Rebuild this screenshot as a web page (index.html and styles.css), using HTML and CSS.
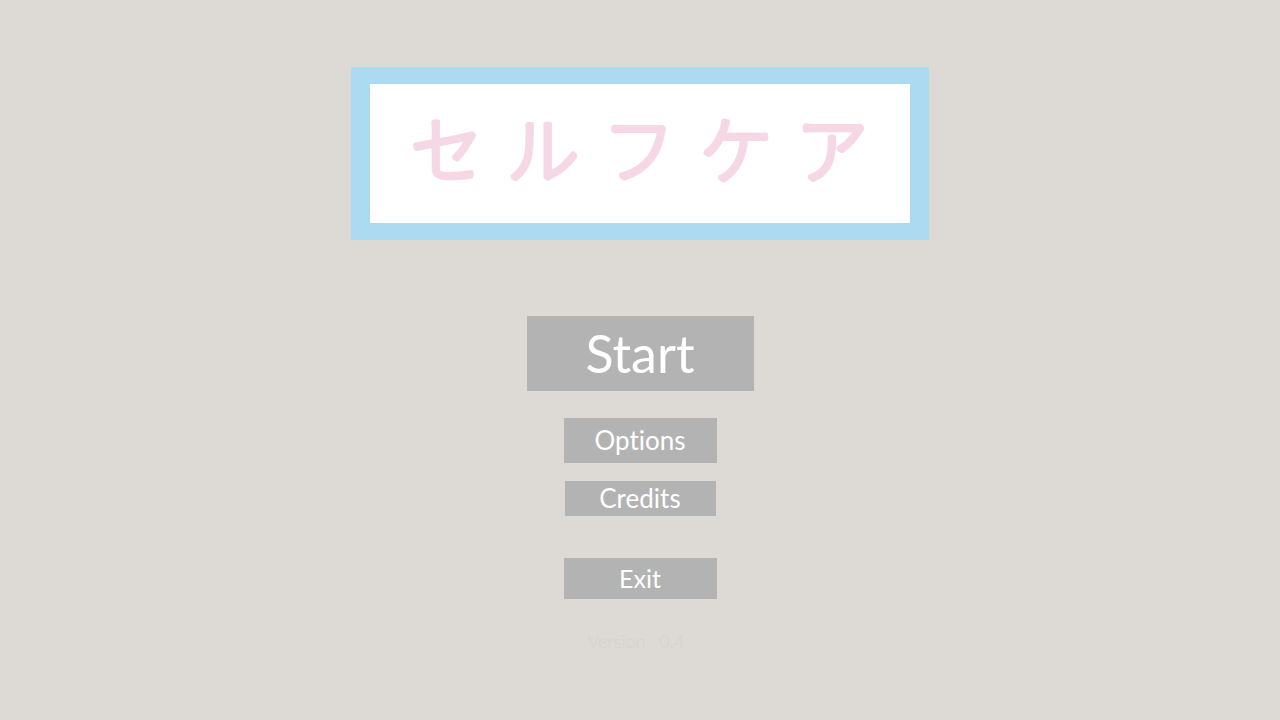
FILE: index.html
```html
<!DOCTYPE html>
<html lang="en">
<head>
<meta charset="utf-8">
<meta name="viewport" content="width=device-width, initial-scale=1">
<title>セルフケア</title>
<link rel="stylesheet" href="styles.css">
</head>
<body>
<main class="menu">
  <h1 class="logo" lang="ja">
    <svg class="logo-text" viewBox="0 0 540 139" role="img" aria-label="セルフケア">
      <text x="77 173 269 366 462" y="93">セルフケア</text>
    </svg>
  </h1>
  <nav class="actions" aria-label="Main menu">
    <button class="button button-start" type="button">Start</button>
    <button class="button button-options" type="button">Options</button>
    <button class="button button-credits" type="button">Credits</button>
    <button class="button button-exit" type="button">Exit</button>
  </nav>
  <p class="version"><span>Version</span><span>0.4</span></p>
</main>
</body>
</html>
```
FILE: styles.css
```css
* {
  box-sizing: border-box;
}

body {
  margin: 0;
  min-height: 100vh;
  background: #dddad5;
  font-family: Lato, "Noto Sans CJK JP", sans-serif;
}

.menu {
  display: flex;
  flex-direction: column;
  align-items: center;
  padding: 67px 24px 24px;
}

.logo {
  width: 100%;
  max-width: 578px;
  margin: 0 0 76px;
  padding: 17px 19px;
  background: #abdaf1;
}

.logo-text {
  display: block;
  width: 100%;
  background: #fff;
  fill: #f5d7e5;
  stroke: #f5d7e5;
  stroke-width: 6px;
  stroke-linejoin: round;
  font-family: "Noto Sans CJK JP", sans-serif;
  font-size: 72px;
  font-weight: 100;
  text-anchor: middle;
}

.actions {
  display: flex;
  flex-direction: column;
  align-items: center;
}

.button {
  border: 0;
  padding: 0 30px;
  background: #b3b3b3;
  color: #fff;
  font-family: inherit;
  font-size: 26px;
  font-variant-ligatures: none;
  line-height: 35px;
  cursor: pointer;
}

.button:hover {
  background: #a8a8a8;
}

.button-start {
  min-width: 227px;
  padding-block: 10px;
  margin-bottom: 27px;
  font-size: 52px;
  line-height: 55px;
}

.button-options {
  min-width: 153px;
  padding-block: 5px;
  margin-bottom: 18px;
}

.button-credits {
  min-width: 151px;
  margin-bottom: 42px;
}

.button-exit {
  min-width: 153px;
  padding-block: 3px;
  font-size: 25px;
}

.version {
  display: flex;
  gap: 14px;
  margin: 30px 8px 0 0;
  color: #d5d2cd;
  font-size: 18px;
  font-weight: 300;
  line-height: 24px;
}
```
